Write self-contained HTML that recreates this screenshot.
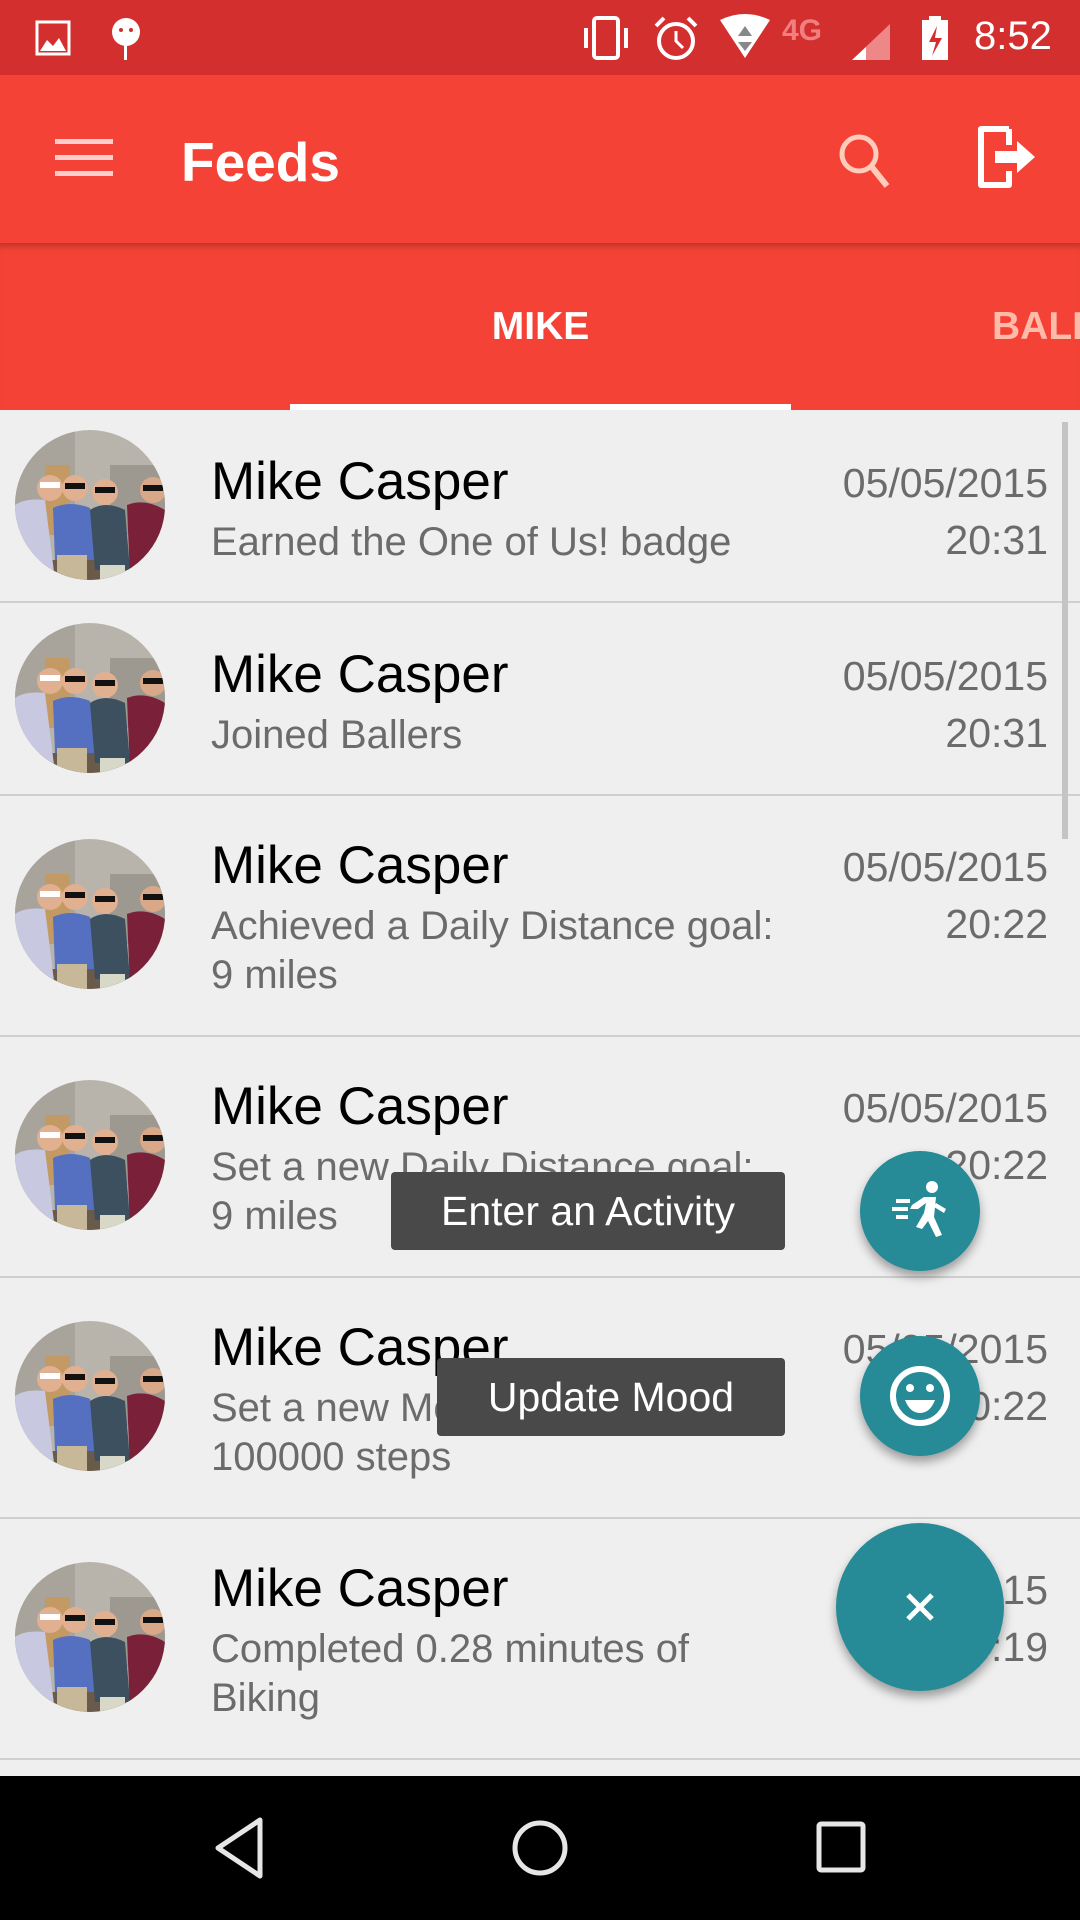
<!DOCTYPE html>
<html><head><meta charset="utf-8"><style>
*{margin:0;padding:0;box-sizing:border-box}
html,body{overflow:hidden}
body{width:1080px;height:1920px;overflow:hidden;background:#efefef;font-family:"Liberation Sans",sans-serif;position:relative}
.abs{position:absolute}
.status{left:0;top:0;width:1080px;height:75px;background:#d32f2f;overflow:hidden}
.bar{left:0;top:75px;width:1080px;height:168px;background:#f44336}
.tabs{left:0;top:243px;width:1080px;height:167px;background:#f44336;box-shadow:inset 0 8px 8px -6px rgba(0,0,0,.3);overflow:hidden}
.row{position:absolute;left:0;width:1080px;border-bottom:2px solid #cfcfcf}
.name{position:absolute;left:211px;font-size:53px;color:#000}
.sub{position:absolute;left:211px;font-size:40px;color:#6b6b6b;line-height:49px}
.date{position:absolute;right:32px;font-size:41px;color:#6b6b6b;text-align:right;line-height:57px}
.av{position:absolute;left:15px;width:150px;height:150px}
.tip{position:absolute;background:#494949;color:#fff;font-size:41px;text-align:center;border-radius:4px}
.fab{position:absolute;border-radius:50%;background:#268a97;box-shadow:0 6px 10px rgba(0,0,0,.35)}
</style></head><body>
<svg width="0" height="0" style="position:absolute"><defs>
<clipPath id="cc"><circle cx="75" cy="75" r="75"/></clipPath>
<symbol id="av" viewBox="0 0 150 150"><g clip-path="url(#cc)">
<rect width="150" height="150" fill="#b8b4ac"/>
<rect x="0" y="0" width="60" height="90" fill="#a8a49c"/>
<rect x="30" y="35" width="25" height="70" fill="#c49a64"/>
<rect x="95" y="35" width="60" height="70" fill="#9d9890"/>
<rect x="0" y="130" width="150" height="20" fill="#6a5a4a"/>
<path d="M0 75 Q10 68 30 70 L40 150 L0 150Z" fill="#c8c8e0"/>
<path d="M38 78 Q55 70 75 78 L80 130 L40 130Z" fill="#5570c0"/>
<rect x="42" y="125" width="30" height="25" fill="#c8b89a"/>
<path d="M75 80 Q90 70 110 80 L115 140 L80 140Z" fill="#3d5060"/>
<rect x="85" y="135" width="25" height="15" fill="#d8d8c8"/>
<path d="M112 75 Q130 68 150 80 L150 150 L115 150Z" fill="#7a2038"/>
<circle cx="35" cy="58" r="13" fill="#e0b090"/><circle cx="60" cy="58" r="13" fill="#e0b090"/>
<circle cx="90" cy="62" r="13" fill="#e0b090"/><circle cx="138" cy="60" r="13" fill="#d8a888"/>
<rect x="25" y="52" width="20" height="6" fill="#fff"/><rect x="50" y="53" width="20" height="6" fill="#111"/>
<rect x="80" y="57" width="20" height="6" fill="#111"/><rect x="128" y="55" width="20" height="6" fill="#111"/>
</g></symbol></defs></svg>

<div class="abs status">
<svg class="abs" style="left:35px;top:20px" width="40" height="36"><rect x="2" y="2" width="32" height="32" fill="none" stroke="#fff" stroke-width="3"/><path d="M5 31 L12 20 L18 26 L24 18 L31 31Z" fill="#fff"/></svg>
<svg class="abs" style="left:108px;top:14px" width="36" height="48"><circle cx="18" cy="18" r="14" fill="#fff"/><rect x="16" y="30" width="3" height="16" fill="#fff"/><circle cx="13" cy="16" r="2" fill="#d32f2f"/><circle cx="23" cy="16" r="2" fill="#d32f2f"/></svg>
<svg class="abs" style="left:580px;top:14px" width="56" height="48"><rect x="14" y="4" width="24" height="40" rx="3" fill="none" stroke="#fff" stroke-width="4"/><rect x="4" y="14" width="4" height="20" fill="#fff"/><rect x="44" y="14" width="4" height="20" fill="#fff"/></svg>
<svg class="abs" style="left:652px;top:14px" width="48" height="48"><circle cx="24" cy="27" r="17" fill="none" stroke="#fff" stroke-width="4"/><path d="M24 17 V27 L31 34" stroke="#fff" stroke-width="3" fill="none"/><path d="M4 12 L12 4 M44 12 L36 4" stroke="#fff" stroke-width="4"/></svg>
<svg class="abs" style="left:718px;top:14px" width="54" height="46"><path d="M2 6 Q27 -6 52 6 L27 44Z" fill="#fff"/><path d="M27 12 L20 22 H34Z M20 28 H34 L27 37Z" fill="#888"/></svg>
<div class="abs" style="left:782px;top:14px;color:#f08080;font-size:30px;font-weight:bold">4G</div>
<svg class="abs" style="left:850px;top:22px" width="42" height="40"><path d="M2 38 L40 2 V38Z" fill="#e88"/><path d="M2 38 L16 25 V38Z" fill="#fff"/></svg>
<svg class="abs" style="left:920px;top:14px" width="30" height="48"><rect x="9" y="2" width="12" height="6" fill="#fff"/><rect x="2" y="6" width="26" height="40" fill="#fff"/><path d="M17 12 L9 28 H16 L12 42 L22 24 H15Z" fill="#d32f2f"/></svg>
<div class="abs" style="left:974px;top:14px;color:#fff;font-size:40px">8:52</div>
</div>

<div class="abs bar">
<svg class="abs" style="left:55px;top:62px" width="58" height="42"><rect y="2" width="58" height="5" fill="#fcc"/><rect y="18" width="58" height="5" fill="#fcc"/><rect y="34" width="58" height="5" fill="#fcc"/></svg>
<div class="abs" style="left:181px;top:55px;color:#fff;font-size:55px;font-weight:bold">Feeds</div>
<svg class="abs" style="left:835px;top:55px" width="60" height="60"><circle cx="24" cy="24" r="17" fill="none" stroke="#fcb" stroke-width="5"/><path d="M36 36 L52 56" stroke="#fcb" stroke-width="6"/></svg>
<svg class="abs" style="left:975px;top:50px" width="66" height="66"><path d="M34 4 H6 V60 H34 V46" fill="none" stroke="#fff" stroke-width="6" stroke-linejoin="round"/><path d="M34 20 V4" stroke="#fff" stroke-width="6"/><path d="M20 26 H42 V16 L60 32 L42 48 V38 H20Z" fill="#fff"/></svg>
</div>

<div class="abs tabs">
<div class="abs" style="left:290px;width:501px;top:62px;text-align:center;color:#fff;font-size:39px;font-weight:bold">MIKE</div>
<div class="abs" style="left:992px;top:62px;color:#fba;font-size:39px;font-weight:bold;white-space:nowrap">BALLERS</div>
<div class="abs" style="left:290px;top:161px;width:501px;height:6px;background:#fff"></div>
</div>

<div class="row" style="top:410px;height:193px"><svg class="av" style="top:20px"><use href="#av"/></svg>
<div class="name" style="top:41px">Mike Casper</div><div class="sub" style="top:108px">Earned the One of Us! badge</div>
<div class="date" style="top:45px">05/05/2015<br>20:31</div></div>
<div class="row" style="top:601px;height:195px"><svg class="av" style="top:22px"><use href="#av"/></svg>
<div class="name" style="top:43px">Mike Casper</div><div class="sub" style="top:110px">Joined Ballers</div>
<div class="date" style="top:47px">05/05/2015<br>20:31</div></div>
<div class="row" style="top:794px;height:243px"><svg class="av" style="top:45px"><use href="#av"/></svg>
<div class="name" style="top:41px">Mike Casper</div><div class="sub" style="top:108px">Achieved a Daily Distance goal:<br>9 miles</div>
<div class="date" style="top:45px">05/05/2015<br>20:22</div></div>
<div class="row" style="top:1035px;height:243px"><svg class="av" style="top:45px"><use href="#av"/></svg>
<div class="name" style="top:41px">Mike Casper</div><div class="sub" style="top:108px">Set a new Daily Distance goal:<br>9 miles</div>
<div class="date" style="top:45px">05/05/2015<br>20:22</div></div>
<div class="row" style="top:1276px;height:243px"><svg class="av" style="top:45px"><use href="#av"/></svg>
<div class="name" style="top:41px">Mike Casper</div><div class="sub" style="top:108px">Set a new Monthly Steps goal:<br>100000 steps</div>
<div class="date" style="top:45px">05/05/2015<br>20:22</div></div>
<div class="row" style="top:1517px;height:243px"><svg class="av" style="top:45px"><use href="#av"/></svg>
<div class="name" style="top:41px">Mike Casper</div><div class="sub" style="top:108px">Completed 0.28 minutes of<br>Biking</div>
<div class="date" style="top:45px">05/05/2015<br>20:19</div></div>

<div class="abs" style="left:1062px;top:422px;width:6px;height:417px;background:#c4c4c4"></div>

<div class="tip" style="left:391px;top:1172px;width:394px;height:78px;line-height:78px">Enter an Activity</div>
<div class="tip" style="left:437px;top:1358px;width:348px;height:78px;line-height:78px">Update Mood</div>

<div class="fab" style="left:860px;top:1151px;width:120px;height:120px">
<svg width="120" height="120"><g fill="#fff"><circle cx="72" cy="36" r="6"/><path d="M64 46 L76 46 L74 66 L82 84 L76 86 L68 70 L62 78 L56 76 L64 62 L66 52 L58 58 H50 L52 54Z"/><path d="M76 52 L86 58 L84 62 L74 56Z"/><rect x="36" y="48" width="14" height="4"/><rect x="32" y="56" width="16" height="4"/><rect x="36" y="64" width="12" height="4"/></g></svg></div>
<div class="fab" style="left:860px;top:1336px;width:120px;height:120px">
<svg width="120" height="120"><circle cx="60" cy="60" r="27" fill="none" stroke="#fff" stroke-width="6"/><circle cx="50" cy="52" r="4" fill="#fff"/><circle cx="70" cy="52" r="4" fill="#fff"/><path d="M45 64 H75 Q70 77 60 77 Q50 77 45 64Z" fill="#fff"/></svg></div>
<div class="fab" style="left:836px;top:1523px;width:168px;height:168px">
<svg width="168" height="168"><path d="M72 72 L96 96 M96 72 L72 96" stroke="#fff" stroke-width="5"/></svg></div>

<div class="abs" style="left:0;top:1776px;width:1080px;height:144px;background:#000">
<svg class="abs" style="left:210px;top:40px" width="60" height="64"><path d="M50 4 L8 32 L50 60Z" fill="none" stroke="#e6e6e6" stroke-width="5" stroke-linejoin="round"/></svg>
<svg class="abs" style="left:510px;top:42px" width="60" height="60"><circle cx="30" cy="30" r="25" fill="none" stroke="#e6e6e6" stroke-width="5"/></svg>
<svg class="abs" style="left:815px;top:44px" width="52" height="54"><rect x="4" y="4" width="44" height="46" rx="2" fill="none" stroke="#e6e6e6" stroke-width="5"/></svg>
</div>
</body></html>
